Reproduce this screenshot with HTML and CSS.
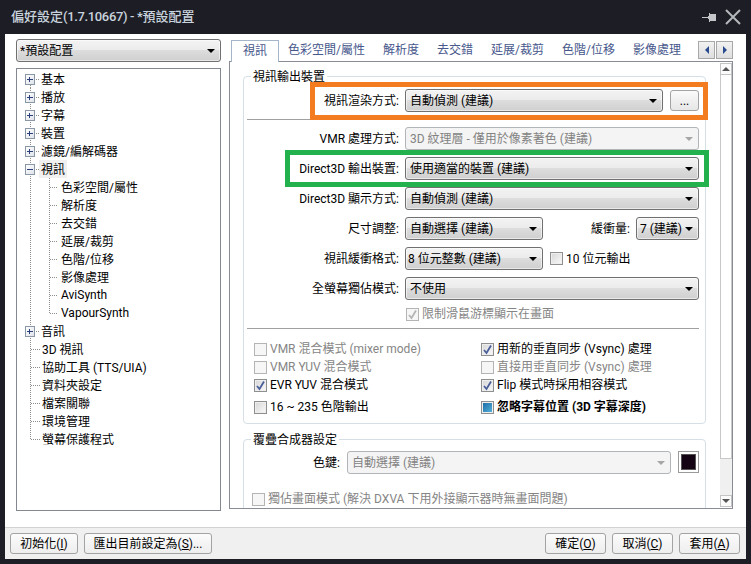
FILE: index.html
```html
<!DOCTYPE html>
<html>
<head>
    <title>偏好設定</title>
    <link rel="stylesheet" href="styles.css">
</head>
<body>
<div class="window">
    <div class="titlebar">
        <span class="title">偏好設定<span class="version">(1.7.10667) - *</span>預設配置</span>
        <svg class="pin" width="15" height="11" viewBox="0 0 15 11"><path d="M0 5h6V4h1V1h1v1h6v7H8v1H7V7H6V6H0z" fill="#c4c6c9"/></svg>
        <svg class="close" width="16" height="16" viewBox="0 0 16 16"><path d="M1 1l14 14M15 1L1 15" stroke="#b4b7bb" stroke-width="2" fill="none"/></svg>
    </div>

    <div class="client">
        <div class="main">
            <div class="left">
                <div class="combo combo-profile"><span class="combo-text">*預設配置</span><span class="arrow"></span></div>
                <div class="tree">
                    <div class="node first"><span class="exp plus"></span><span class="dash short"></span><span class="label">基本</span></div>
                    <div class="node"><span class="exp plus"></span><span class="dash short"></span><span class="label">播放</span></div>
                    <div class="node"><span class="exp plus"></span><span class="dash short"></span><span class="label">字幕</span></div>
                    <div class="node"><span class="exp plus"></span><span class="dash short"></span><span class="label">裝置</span></div>
                    <div class="node"><span class="exp plus"></span><span class="dash short"></span><span class="label">濾鏡/編解碼器</span></div>
                    <div class="node"><span class="exp"></span><span class="dash short"></span><span class="label selected">視訊</span></div>
                    <div class="node sub"><span class="dash long"></span><span class="label">色彩空間/屬性</span></div>
                    <div class="node sub"><span class="dash long"></span><span class="label">解析度</span></div>
                    <div class="node sub"><span class="dash long"></span><span class="label">去交錯</span></div>
                    <div class="node sub"><span class="dash long"></span><span class="label">延展/裁剪</span></div>
                    <div class="node sub"><span class="dash long"></span><span class="label">色階/位移</span></div>
                    <div class="node sub"><span class="dash long"></span><span class="label">影像處理</span></div>
                    <div class="node sub"><span class="dash long"></span><span class="label label-latin">AviSynth</span></div>
                    <div class="node sub sub-last"><span class="dash long"></span><span class="label label-latin">VapourSynth</span></div>
                    <div class="node"><span class="exp plus"></span><span class="dash short"></span><span class="label">音訊</span></div>
                    <div class="node leaf"><span class="dash leaf-dash"></span><span class="label">3D 視訊</span></div>
                    <div class="node leaf"><span class="dash leaf-dash"></span><span class="label">協助工具 (TTS/UIA)</span></div>
                    <div class="node leaf"><span class="dash leaf-dash"></span><span class="label">資料夾設定</span></div>
                    <div class="node leaf"><span class="dash leaf-dash"></span><span class="label">檔案關聯</span></div>
                    <div class="node leaf"><span class="dash leaf-dash"></span><span class="label">環境管理</span></div>
                    <div class="node leaf last"><span class="dash leaf-dash"></span><span class="label">螢幕保護程式</span></div>
                </div>
            </div>

            <div class="right">
                <div class="tabs">
                    <div class="tab active">視訊</div>
                    <div class="tab">色彩空間/屬性</div>
                    <div class="tab">解析度</div>
                    <div class="tab">去交錯</div>
                    <div class="tab">延展/裁剪</div>
                    <div class="tab">色階/位移</div>
                    <div class="tab">影像處理</div>
                    <div class="tab-scroll">
                        <div class="tab-btn"><span class="tri-left"></span></div>
                        <div class="tab-btn"><span class="tri-right"></span></div>
                    </div>
                </div>

                <div class="pane">
                    <div class="pane-content">
                        <fieldset class="group">
                            <legend>視訊輸出裝置</legend>
                            <div class="rows">
                                <div class="row">
                                    <span class="row-label">視訊渲染方式:</span>
                                    <div class="combo grow"><span class="combo-text">自動偵測 (建議)</span><span class="arrow"></span></div>
                                    <div class="btn btn-more">...</div>
                                </div>
                                <div class="sep"></div>
                                <div class="row">
                                    <span class="row-label">VMR 處理方式:</span>
                                    <div class="combo disabled grow"><span class="combo-text">3D 紋理層 - 僅用於像素著色 (建議)</span><span class="arrow"></span></div>
                                </div>
                                <div class="row">
                                    <span class="row-label">Direct3D 輸出裝置:</span>
                                    <div class="combo grow"><span class="combo-text">使用適當的裝置 (建議)</span><span class="arrow"></span></div>
                                </div>
                                <div class="row">
                                    <span class="row-label">Direct3D 顯示方式:</span>
                                    <div class="combo grow"><span class="combo-text">自動偵測 (建議)</span><span class="arrow"></span></div>
                                </div>
                                <div class="row">
                                    <span class="row-label">尺寸調整:</span>
                                    <div class="combo combo-mid"><span class="combo-text">自動選擇 (建議)</span><span class="arrow"></span></div>
                                    <span class="buffer-label">緩衝量:</span>
                                    <div class="combo combo-small"><span class="combo-text">7 (建議)</span><span class="arrow"></span></div>
                                </div>
                                <div class="row">
                                    <span class="row-label">視訊緩衝格式:</span>
                                    <div class="combo combo-mid combo-tight"><span class="combo-text">8 位元整數 (建議)</span><span class="arrow"></span></div>
                                    <label class="check check-10bit"><span class="box"></span>10 位元輸出</label>
                                </div>
                                <div class="row">
                                    <span class="row-label">全螢幕獨佔模式:</span>
                                    <div class="combo grow"><span class="combo-text">不使用</span><span class="arrow"></span></div>
                                </div>
                                <label class="check check-mouse off"><span class="box"><svg viewBox="0 0 11 11"><path d="M2 6l2.5 3L9 1.5"/></svg></span>限制滑鼠游標顯示在畫面</label>
                                <div class="sep sep-checks"></div>
                            </div>
                            <div class="checks">
                                <label class="check off"><span class="box"></span>VMR 混合模式 (mixer mode)</label>
                                <label class="check"><span class="box"><svg viewBox="0 0 11 11"><path d="M2 6l2.5 3L9 1.5"/></svg></span>用新的垂直同步 (Vsync) 處理</label>
                                <label class="check off"><span class="box"></span>VMR YUV 混合模式</label>
                                <label class="check off"><span class="box"></span>直接用垂直同步 (Vsync) 處理</label>
                                <label class="check"><span class="box"><svg viewBox="0 0 11 11"><path d="M2 6l2.5 3L9 1.5"/></svg></span>EVR YUV 混合模式</label>
                                <label class="check"><span class="box"><svg viewBox="0 0 11 11"><path d="M2 6l2.5 3L9 1.5"/></svg></span>Flip 模式時採用相容模式</label>
                                <label class="check spaced"><span class="box"></span>16 ~ 235 色階輸出</label>
                                <label class="check spaced strong"><span class="box"><span class="fill"></span></span>忽略字幕位置 (3D 字幕深度)</label>
                            </div>
                        </fieldset>

                        <fieldset class="group group-overlay">
                            <legend>覆疊合成器設定</legend>
                            <div class="row">
                                <span class="key-label">色鍵:</span>
                                <div class="combo disabled combo-key"><span class="combo-text">自動選擇 (建議)</span><span class="arrow"></span></div>
                                <div class="swatch"></div>
                            </div>
                            <label class="check check-exclusive off"><span class="box"></span>獨佔畫面模式 (解決 DXVA 下用外接顯示器時無畫面問題)</label>
                        </fieldset>
                    </div>

                    <div class="scrollbar">
                        <div class="sb-btn"><span class="tri-up"></span></div>
                        <div class="sb-thumb"></div>
                        <div class="sb-track"></div>
                        <div class="sb-btn"><span class="tri-down"></span></div>
                    </div>
                </div>
            </div>
        </div>

        <div class="footer">
            <div class="btn btn-init">初始化(<u>I</u>)</div>
            <div class="btn btn-export">匯出目前設定為(<u>S</u>)...</div>
            <div class="btn btn-foot push">確定(<u>O</u>)</div>
            <div class="btn btn-foot">取消(<u>C</u>)</div>
            <div class="btn btn-foot">套用(<u>A</u>)</div>
        </div>
    </div>

    <div class="mark mark-orange"></div>
    <div class="mark mark-green"></div>
</div>
</body>
</html>
```

FILE: styles.css
```css
* { box-sizing: border-box; }
body {
    margin: 0;
    background: #1d1e25;
    font-family: Roboto, "Noto Sans CJK TC", sans-serif;
    font-size: 12px;
    line-height: 16px;
    color: #000;
    overflow: hidden;
}
.window {
    position: relative;
    width: 751px;
    height: 564px;
    display: flex;
    flex-direction: column;
    background: #1d1e25;
}

/* title bar */
.titlebar {
    height: 34px;
    flex: none;
    display: flex;
    align-items: center;
    padding: 0 10px 0 11px;
    color: #c9d3dd;
    font-size: 13px;
    font-weight: 500;
}
.version { letter-spacing: -.35px; }
.pin { margin-left: auto; margin-right: 8px; }

.client {
    flex: none;
    height: 525px;
    margin: 0 5px;
    background: #fff;
    display: flex;
    flex-direction: column;
}
.main {
    height: 493px;
    flex: none;
    display: flex;
}

/* left column */
.left {
    width: 205px;
    margin-left: 11px;
    padding-top: 5px;
}
.combo {
    height: 23px;
    flex: none;
    display: flex;
    align-items: center;
    justify-content: space-between;
    padding: 0 5px 0 4px;
    border: 1px solid #707070;
    border-radius: 3px;
    background: linear-gradient(#f3f3f3, #ebebeb 49%, #dddddd 50%, #cfcfcf);
    box-shadow: inset 0 0 0 1px rgba(255, 255, 255, .55);
}
.combo-text {
    flex: 1;
    min-width: 0;
    overflow: hidden;
    white-space: nowrap;
}
.arrow {
    flex: none;
    margin-left: 2px;
    border-left: 4px solid transparent;
    border-right: 4px solid transparent;
    border-top: 4px solid #000;
}
.combo.disabled {
    border-color: #b1b5b8;
    background: #f4f4f4;
    box-shadow: none;
    color: #838383;
}
.combo.disabled .arrow { border-top-color: #a6a6a6; }
.combo-profile { padding-left: 3px; }

.tree {
    height: 443px;
    margin-top: 6px;
    padding-top: 1px;
    border: 1px solid #828790;
}
.node {
    height: 18px;
    display: flex;
    align-items: center;
    padding-left: 8px;
    background: repeating-linear-gradient(#8d8d8d 0 1px, transparent 1px 2px) 13px 0 / 1px 100% no-repeat;
}
.node.first { background-position: 13px 9px; background-size: 1px 9px; }
.node.last { background-size: 1px 10px; }
.node.leaf { padding-left: 14px; }
.node.sub {
    padding-left: 33px;
    background:
        repeating-linear-gradient(#8d8d8d 0 1px, transparent 1px 2px) 13px 0 / 1px 100% no-repeat,
        repeating-linear-gradient(#8d8d8d 0 1px, transparent 1px 2px) 32px 0 / 1px 100% no-repeat;
}
.node.sub-last {
    background:
        repeating-linear-gradient(#8d8d8d 0 1px, transparent 1px 2px) 13px 0 / 1px 100% no-repeat,
        repeating-linear-gradient(#8d8d8d 0 1px, transparent 1px 2px) 32px 0 / 1px 10px no-repeat;
}
.exp {
    position: relative;
    width: 10px;
    height: 11px;
    flex: none;
    border: 1px solid #8a97a5;
    background: linear-gradient(135deg, #fff, #dfe3ea);
}
.exp::before {
    content: "";
    position: absolute;
    left: 1px;
    top: 4px;
    width: 6px;
    height: 1px;
    background: #2a3f7c;
}
.exp.plus::after {
    content: "";
    position: absolute;
    left: 3px;
    top: 2px;
    width: 1px;
    height: 5px;
    background: #2a3f7c;
}
.dash {
    flex: none;
    height: 1px;
    background: repeating-linear-gradient(90deg, #8d8d8d 0 1px, transparent 1px 2px);
}
.dash.short { width: 4px; margin-left: 1px; }
.dash.long { width: 8px; margin-right: 1px; }
.dash.leaf-dash { width: 9px; }
.label {
    padding: 2px 2px 0;
    line-height: 16px;
    white-space: nowrap;
}
.label-latin { padding-top: 0; line-height: 18px; }
.exp + .dash + .label { margin-left: -1px; }
.label.selected { background: #f0f0f0; }

/* right column */
.right {
    width: 504px;
    margin-left: 8px;
    padding-top: 6px;
}
.tabs {
    position: relative;
    z-index: 1;
    height: 22px;
    display: flex;
    padding-left: 2px;
}
.tab {
    padding: 0 9px;
    line-height: 20px;
    color: #48588c;
    white-space: nowrap;
}
.tab.active {
    width: 48px;
    padding: 0;
    text-align: center;
    background: #fff;
    border: 1px solid #a5b5c9;
    border-bottom: 0;
}
.tab-scroll {
    margin-left: auto;
    margin-top: 1px;
    height: 18px;
    display: flex;
    gap: 1px;
}
.tab-btn {
    width: 17px;
    display: flex;
    align-items: center;
    justify-content: center;
    border: 1px solid #a8a8a8;
    background: linear-gradient(#f2f2f2, #dedede);
}
.tri-left, .tri-right {
    border-top: 4px solid transparent;
    border-bottom: 4px solid transparent;
}
.tri-left { border-right: 4px solid #2a4a90; }
.tri-right { border-left: 4px solid #2a4a90; }

.pane {
    height: 448px;
    margin-top: -1px;
    display: flex;
    border: 1px solid #898c95;
}
.pane-content {
    width: 490px;
    height: 446px;
    padding: 6px 0 0 13px;
    overflow: hidden;
}
.group {
    width: 463px;
    margin: 0;
    padding: 5px 6px 11px 3px;
    border: 1px solid #d5dfe5;
    border-radius: 4px;
}
.group legend {
    margin-left: 4px;
    padding: 2px 2px 0;
    line-height: 14px;
}
.group-overlay {
    margin-top: 7px;
    height: 90px;
    padding-top: 4px;
    padding-bottom: 0;
}
.rows {
    display: flex;
    flex-direction: column;
    gap: 7px;
}
.row {
    display: flex;
    align-items: center;
}
.row-label {
    width: 155px;
    margin-left: -3px;
    margin-right: 6px;
    text-align: right;
    white-space: nowrap;
}
.grow { flex: 1; }
.btn {
    display: flex;
    align-items: center;
    justify-content: center;
    border: 1px solid #a3a3a3;
    border-radius: 3px;
    background: linear-gradient(#fbfbfb, #f0f0f0 50%, #e7e7e7);
    white-space: nowrap;
}
.btn-more {
    width: 29px;
    height: 21px;
    margin-left: 7px;
}
.sep {
    height: 1px;
    background: #a0a0a0;
}
.sep-checks { margin-top: -1px; }
.combo-mid { width: 138px; }
.combo-small { width: 63px; padding-left: 3px; }
.combo-tight { padding-left: 2px; }
.buffer-label {
    margin-left: auto;
    margin-right: 6px;
}

/* checkboxes */
.check {
    display: flex;
    align-items: center;
    height: 18px;
    white-space: nowrap;
}
.box {
    width: 13px;
    height: 13px;
    flex: none;
    margin-right: 3px;
    border: 1px solid #8e8f8f;
    background: linear-gradient(135deg, #d6d6d6, #fafafa);
    box-shadow: inset 0 0 0 1px #eee;
    display: flex;
    align-items: center;
    justify-content: center;
}
.box svg { width: 11px; height: 11px; }
.box path {
    fill: none;
    stroke: #4a5f9a;
    stroke-width: 1.8;
}
.box .fill {
    width: 9px;
    height: 9px;
    background: linear-gradient(135deg, #1f6ea6, #52b0d8);
}
.check.off { color: #858585; }
.check.off .box {
    border-color: #b4b4b4;
    background: #f6f6f6;
    box-shadow: none;
}
.check.off path { stroke: #b4b4b4; }
.check-10bit { margin-left: 7px; }
.check-mouse { margin-left: 159px; height: 16px; margin-top: -1px; }
.checks {
    display: grid;
    grid-template-columns: 227px 1fr;
    grid-auto-rows: 18px;
    margin-top: 11px;
    margin-left: 7px;
}
.spaced { margin-top: 4px; }
.strong { font-weight: 700; }

.key-label {
    width: 96px;
    margin-left: -3px;
    margin-right: 7px;
    text-align: right;
}
.combo-key { width: 324px; }
.swatch {
    width: 21px;
    height: 22px;
    margin-left: 7px;
    margin-top: -2px;
    background: #140414;
    border: 3px solid #fff;
    outline: 1px solid #9a9a9a;
    outline-offset: -1px;
    box-shadow: inset 0 0 0 1px #555;
}
.check-exclusive { margin-top: 16px; margin-left: 5px; }

/* scrollbar */
.scrollbar {
    width: 12px;
    margin: 1px 0 1px 0;
    display: flex;
    flex-direction: column;
    background: #f0f0f0;
}
.sb-btn {
    height: 12px;
    flex: none;
    display: flex;
    align-items: center;
    justify-content: center;
    background: #fbfbfb;
    border: 1px solid #c4c4c4;
}
.tri-up, .tri-down {
    border-left: 4px solid transparent;
    border-right: 4px solid transparent;
}
.tri-up { border-bottom: 4px solid #555; }
.tri-down { border-top: 4px solid #555; }
.sb-thumb {
    height: 384px;
    flex: none;
    background: #fff;
    border: 1px solid #c8c8c8;
    border-top: 0;
}
.sb-track { flex: 1; }

/* footer */
.footer {
    flex: 1;
    display: flex;
    gap: 6px;
    padding: 5px 6px 0 5px;
    background: #f0f0f0;
    border-top: 1px solid #d2d2d2;
}
.footer .btn { height: 21px; background: linear-gradient(#fbfbfb, #eeeeee); }
.btn-init { width: 68px; }
.btn-export { width: 128px; }
.btn-foot { width: 61px; }
.push { margin-left: auto; }

/* highlight boxes drawn over the dialog */
.mark {
    position: absolute;
    border: 5px solid;
    pointer-events: none;
}
.mark-orange {
    left: 310px;
    top: 82px;
    width: 398px;
    height: 38px;
    border-color: #f47c20;
}
.mark-green {
    left: 285px;
    top: 150px;
    width: 424px;
    height: 37px;
    border-color: #22b14c;
}
```
